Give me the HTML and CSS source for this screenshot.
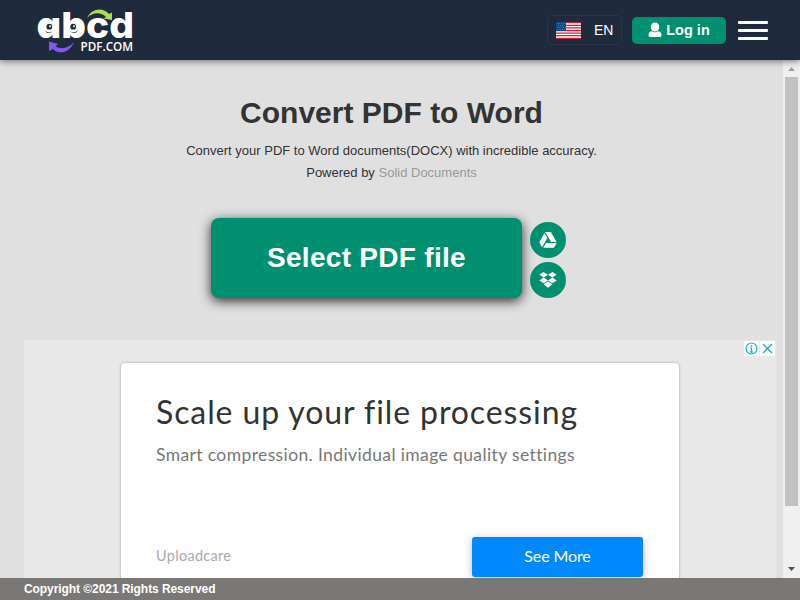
FILE: index.html
```html
<!DOCTYPE html>
<html lang="en">
<head>
<meta charset="utf-8">
<title>Convert PDF to Word</title>
<link rel="stylesheet" href="styles.css">
</head>
<body>
<header class="topbar">
  <svg class="logo" width="104" height="48" viewBox="0 0 104 48">
    <text class="logo-name" x="1.500" y="32" textLength="97.500" lengthAdjust="spacingAndGlyphs">abcd</text>
    <circle cx="14" cy="21.500" r="5" fill="#fff"/><circle cx="38.500" cy="21.500" r="5" fill="#fff"/>
    <circle cx="14.300" cy="20.700" r="2.900" fill="#1f2a3c"/><circle cx="38.200" cy="20.700" r="2.900" fill="#1f2a3c"/>
    <circle cx="15" cy="20.300" r="1" fill="#fff"/><circle cx="39" cy="20.300" r="1" fill="#fff"/>
    <path d="M52 12C57 2 68 1 74 8L77 6.500V14L68.500 12.500L71 11C66 6 58 6 52 12Z" fill="#a8dc5c"/>
    <path d="M39 36C35 47 23 49 18 43L14 45V35.500L23 38L20.500 40.500C27 44 34 42 39 36Z" fill="#7f5af0"/>
    <text class="logo-domain" x="45.500" y="44.800" textLength="52.500" lengthAdjust="spacingAndGlyphs">PDF.COM</text>
  </svg>
  <nav class="actions">
    <div class="language">
      <svg width="25" height="17" viewBox="0 0 25 17">
        <rect width="25" height="17" fill="#fff"/>
        <path d="M0 .6H25M0 3.300H25M0 5.900H25M0 8.500H25M0 11.100H25M0 13.700H25M0 16.300H25" stroke="#c8203f" stroke-width="1.300"/>
        <rect width="10" height="9" fill="#0a4b86"/>
        <path d="M1 1.500H10M2 3.500H10M1 5.500H10M2 7.500H10" stroke="#5580aa" stroke-width=".8" stroke-dasharray="1 1"/>
      </svg>
      <span>EN</span>
    </div>
    <div class="login">
      <svg width="14" height="16" viewBox="0 0 14 16" fill="#fff"><ellipse cx="7" cy="5" rx="4.300" ry="4.500"/><path d="M.5 13C.5 10.500 2 9.500 4 9.200Q7 11.500 10 9.200C12 9.500 13.500 10.500 13.500 13Q13.500 15 12 15H2Q.5 15 .5 13Z"/></svg>
      <span>Log in</span>
    </div>
    <div class="menu"><i></i><i></i><i></i></div>
  </nav>
</header>
<div class="viewport">
  <main>
    <div class="heading">
      <h1>Convert PDF to Word</h1>
      <p class="intro">Convert your PDF to Word documents(DOCX) with incredible accuracy.<br>Powered by <a>Solid Documents</a></p>
    </div>
    <div class="picker">
      <div class="select"><span>Select PDF file</span></div>
      <div class="sources">
        <div class="source"><svg width="18" height="16" viewBox="0 0 18 16" fill="#fff"><path d="M6.200 0H11.800L17.600 10H12.100ZM5.500 1L8.300 5.900L3 15.300L.2 10.500ZM7 10.900H17.700L15 15.700H4.200Z"/></svg></div>
        <div class="source"><svg width="18" height="16" viewBox="0 0 18 16" fill="#fff"><path d="M4.700 0L9 2.800L4.700 5.600L.3 2.800ZM13.300 0L17.700 2.800L13.300 5.600L9 2.800ZM4.700 5.600L9 8.500L4.700 11.300L.3 8.500ZM13.300 5.600L17.700 8.500L13.300 11.300L9 8.500ZM9 9.500L13.300 12.300L9 15.700L4.700 12.300Z"/></svg></div>
      </div>
    </div>
    <section class="advert">
      <div class="ad-controls">
        <svg width="15" height="15" viewBox="0 0 15 15"><circle cx="7.500" cy="7.500" r="5.500" fill="none" stroke="#16aec6" stroke-width="1.200"/><path d="M7.500 4V5.500M6.500 7H7.500V11M6.300 11H8.800" fill="none" stroke="#16aec6" stroke-width="1.400"/></svg>
        <svg width="15" height="15" viewBox="0 0 15 15"><path d="M3 3L12 12M12 3L3 12" stroke="#16aec6" stroke-width="1.400"/></svg>
      </div>
      <article class="card">
        <h2>Scale up your file processing</h2>
        <p class="tagline">Smart compression. Individual image quality settings</p>
        <div class="card-foot"><span class="brand">Uploadcare</span><div class="more"><span>See More</span></div></div>
      </article>
    </section>
  </main>
  <div class="scrollbar">
    <svg width="7" height="4" viewBox="0 0 7 4"><path d="M0 4L3.500 0L7 4Z" fill="#a0a0a0"/></svg>
    <div class="thumb"></div>
    <svg class="down" width="7" height="4" viewBox="0 0 7 4"><path d="M0 0L3.500 4L7 0Z" fill="#505050"/></svg>
  </div>
</div>
<footer><span>Copyright ©2021 Rights Reserved</span></footer>
</body>
</html>
```

FILE: styles.css
```css
* { box-sizing: border-box; }
body { margin: 0; width: 800px; height: 600px; overflow: hidden; display: flex; flex-direction: column; background: #e0e0e0; color: #333; font-family: "Liberation Sans", Arial, sans-serif; }
svg { display: block; flex: none; }
.topbar { height: 60px; flex: none; display: flex; justify-content: space-between; padding: 0 32px 0 35px; background: #1f2a3c; box-shadow: 0 1px 7px rgba(0,0,0,.55); z-index: 1; }
.logo { margin-top: 6px; overflow: visible; }
.logo-name { font: 800 36px Inter, sans-serif; font-feature-settings: "cv11"; fill: #fff; }
.logo-domain { font: 600 12px "Open Sans", sans-serif; fill: #fff; }
.actions { display: flex; align-items: center; color: #fff; }
.language { width: 75px; height: 30px; display: flex; align-items: center; gap: 13px; padding-left: 8px; border: 1px solid #2b3547; border-radius: 5px; font-size: 14px; }
.login { width: 94px; height: 27px; margin: 0 12px 0 10px; display: flex; align-items: center; justify-content: center; gap: 4px; border-radius: 5px; background: #009070; font-size: 14.5px; font-weight: bold; }
.menu { width: 30px; height: 19px; display: flex; flex-direction: column; justify-content: space-between; }
.menu i { height: 3px; border-radius: 1px; background: #fff; }
.viewport { flex: 1; min-height: 0; display: flex; overflow: hidden; }
main { width: 783px; padding: 34px 7px 0 24px; }
.heading { width: 735px; text-align: center; }
h1 { margin: 0; padding-top: 1px; font-size: 30px; line-height: 35px; }
.intro { margin: 10px 0 0; font-size: 13px; line-height: 22px; }
.intro a { color: #999; }
.picker { height: 80px; margin: 34px 0 42px 187px; display: flex; gap: 8px; }
.select { width: 311px; height: 80px; display: flex; align-items: center; justify-content: center; border-radius: 8px; background: #009070; box-shadow: 0 3px 12px rgba(0,0,0,.8); color: #fff; font-size: 28px; letter-spacing: .3px; font-weight: bold; }
.sources { padding-top: 4px; display: flex; flex-direction: column; gap: 4px; }
.source { width: 36px; height: 36px; border-radius: 50%; display: flex; align-items: center; justify-content: center; background: #009070; }
.advert { position: relative; height: 250px; padding: 23px 0 0 97px; background: #e8e8e8; font-family: Lato, sans-serif; }
.ad-controls { position: absolute; top: 1px; right: 1px; display: flex; gap: 1px; }
.ad-controls svg { background: #fff; }
.card { width: 558px; height: 230px; padding: 30px 36px 0 35px; border-radius: 4px 4px 0 0; background: #fff; box-shadow: 0 0 3px rgba(0,0,0,.3); }
h2 { margin: 0; font-size: 32px; line-height: 38px; font-weight: 400; letter-spacing: .9px; white-space: nowrap; }
.tagline { margin: 14px 0 0; font-size: 17.5px; line-height: 20px; letter-spacing: .38px; color: #777; white-space: nowrap; }
.card-foot { margin-top: 72px; display: flex; align-items: center; justify-content: space-between; }
.brand { margin-top: -4px; font-size: 14.5px; letter-spacing: .3px; color: #aaa; }
.more { width: 171px; height: 40px; padding-bottom: 3px; display: flex; align-items: center; justify-content: center; border-radius: 3px; background: #0088ff; box-shadow: 0 2px 8px rgba(0,0,0,.25); color: #fff; font-size: 16px; letter-spacing: -.1px; }
.scrollbar { width: 17px; display: flex; flex-direction: column; align-items: center; padding-top: 7px; background: #f0f0f0; }
.thumb { width: 13px; height: 429px; margin-top: 6px; background: #c1c1c1; }
.down { margin-top: 61px; }
footer { height: 22px; flex: none; padding-left: 24px; background: #7a7876; color: #fff; font-size: 12px; letter-spacing: -.07px; font-weight: bold; line-height: 22px; }
```
